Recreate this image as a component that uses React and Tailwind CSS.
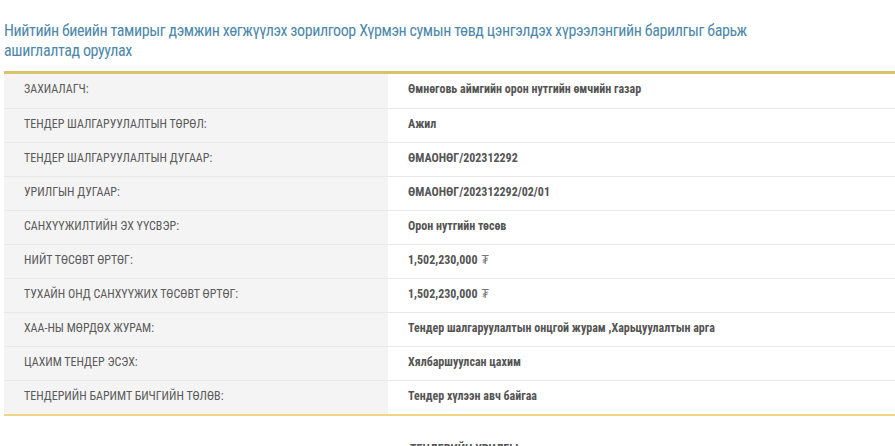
const ROWS = [
  ['ЗАХИАЛАГЧ:', 'Өмнөговь аймгийн орон нутгийн өмчийн газар'],
  ['ТЕНДЕР ШАЛГАРУУЛАЛТЫН ТӨРӨЛ:', 'Ажил'],
  ['ТЕНДЕР ШАЛГАРУУЛАЛТЫН ДУГААР:', 'ӨМАОНӨГ/202312292'],
  ['УРИЛГЫН ДУГААР:', 'ӨМАОНӨГ/202312292/02/01'],
  ['САНХҮҮЖИЛТИЙН ЭХ ҮҮСВЭР:', 'Орон нутгийн төсөв'],
  ['НИЙТ ТӨСӨВТ ӨРТӨГ:', '1,502,230,000', true],
  ['ТУХАЙН ОНД САНХҮҮЖИХ ТӨСӨВТ ӨРТӨГ:', '1,502,230,000', true],
  ['ХАА-НЫ МӨРДӨХ ЖУРАМ:', 'Тендер шалгаруулалтын онцгой журам ,Харьцуулалтын арга'],
  ['ЦАХИМ ТЕНДЕР ЭСЭХ:', 'Хялбаршуулсан цахим'],
  ['ТЕНДЕРИЙН БАРИМТ БИЧГИЙН ТӨЛӨВ:', 'Тендер хүлээн авч байгаа'],
];

export default function App() {
  return (
    <div className="w-[895px] h-[446px] overflow-hidden bg-white" style={{ fontFamily: '"Liberation Sans Narrow", "Roboto Condensed", Roboto, sans-serif' }}>
      <h1 className="w-[760px] pt-[21px] pl-[4px] text-[16px] leading-[20px] tracking-[-0.4px] text-[#4d88aa] font-normal">
        Нийтийн биеийн тамирыг дэмжин хөгжүүлэх зорилгоор Хүрмэн сумын төвд цэнгэлдэх хүрээлэнгийн барилгыг барьж ашиглалтад оруулах
      </h1>
      <div className="ml-[4px] mt-[10px] border-t-[3px] border-[#d7c46c] border-b-2 border-b-[#f1d584]">
        {ROWS.map(([label, value, tg], i) => (
          <div key={i} className={`flex h-[34px] ${i > 0 ? 'border-t border-[#e9e9e9]' : ''}`}>
            <div className="w-[384px] bg-[#f4f4f4] pl-[20px] pb-[4px] flex items-center text-[12px] text-[#5a5a5a]">{label}</div>
            <div className="flex-1 pl-[20px] pb-[4px] flex items-center text-[12px] font-bold text-[#555]">
              {value}
              {tg && <span className="ml-[4px] font-normal text-[#777]">₮</span>}
            </div>
          </div>
        ))}
      </div>
      <div className="pl-[410px] pt-[24px] text-[12px] font-bold text-[#555]">ТЕНДЕРИЙН УРИЛГЫ</div>
    </div>
  );
}
